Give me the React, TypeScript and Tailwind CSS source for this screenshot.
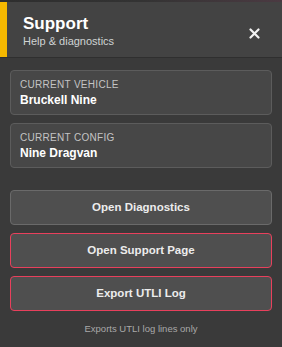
import React from "react";

const font = { fontFamily: '"Liberation Sans", Arial, sans-serif' };

function InfoCard({ label, value }: { label: string; value: string }) {
  return (
    <div className="h-[45px] rounded-[4px] border border-[#5c5c5c] bg-[#474747] px-[9px] pt-[7px]">
      <div className="text-[10px] leading-[13px] tracking-[0.3px] text-[#c4c4c4]">{label}</div>
      <div className="mt-[2px] text-[12px] font-bold leading-[15px] text-white">{value}</div>
    </div>
  );
}

function ActionButton({ children, danger }: { children: React.ReactNode; danger?: boolean }) {
  return (
    <button
      className={`h-[35px] w-full rounded-[4px] border bg-[#4f4f4f] text-[11.5px] font-bold text-[#ececec] ${
        danger ? "border-[#e8405c]" : "border-[#6a6a6a]"
      }`}
    >
      {children}
    </button>
  );
}

export default function App() {
  return (
    <div className="h-[347px] w-[282px] overflow-hidden bg-[#3a3a3a]" style={font}>
      <div className="h-[2px] bg-gradient-to-r from-[#2e2e2e] via-[#333] to-[#4b3a42]" />
      <div className="flex h-[56px] items-center border-b border-[#2f2f2f] bg-[#434343]">
        <div className="h-full w-[7px] bg-[#f5b800]" />
        <div className="ml-[16px] flex-1 pt-[3px]">
          <div className="text-[17px] font-bold leading-[20px] text-white">Support</div>
          <div className="text-[11px] leading-[14px] text-[#cfd3d3]">Help &amp; diagnostics</div>
        </div>
        <svg width="11" height="11" viewBox="0 0 11 11" className="mr-[22px] mt-[8px]">
          <path d="M1.5 1.5 L9.5 9.5 M9.5 1.5 L1.5 9.5" stroke="#f2f2f2" strokeWidth="2.2" strokeLinecap="round" />
        </svg>
      </div>
      <div className="flex flex-col gap-[8px] px-[10px] pt-[12px]">
        <InfoCard label="CURRENT VEHICLE" value="Bruckell Nine" />
        <InfoCard label="CURRENT CONFIG" value="Nine Dragvan" />
      </div>
      <div className="mt-[22px] flex flex-col gap-[8px] px-[10px]">
        <ActionButton>Open Diagnostics</ActionButton>
        <ActionButton danger>Open Support Page</ActionButton>
        <ActionButton danger>Export UTLI Log</ActionButton>
      </div>
      <div className="mt-[12px] text-center text-[9.5px] leading-[12px] text-[#a9a9a9]">
        Exports UTLI log lines only
      </div>
    </div>
  );
}
